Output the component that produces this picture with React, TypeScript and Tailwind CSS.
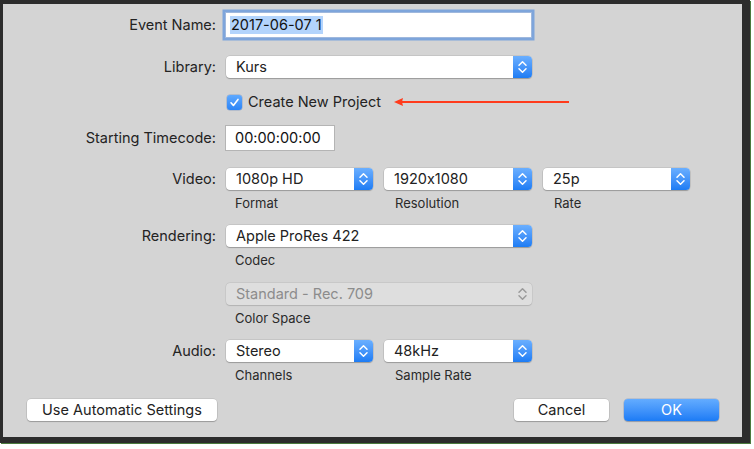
import React from "react";

const font = { fontFamily: 'Inter, "Liberation Sans", sans-serif' };

function Stepper({ disabled = false }: { disabled?: boolean }) {
  return (
    <div
      className={
        disabled
          ? "flex h-full w-[19px] items-center justify-center"
          : "flex h-full w-[19px] items-center justify-center rounded-r-[4px] bg-gradient-to-b from-[#6aafff] to-[#1c7cf4]"
      }
    >
      <svg width="19" height="22" viewBox="0 0 19 22">
        <path
          d="M6 9.2 L9.5 5.8 L13 9.2 M6 12.8 L9.5 16.2 L13 12.8"
          fill="none"
          stroke={disabled ? "#9a9a9a" : "#ffffff"}
          strokeWidth="1.5"
          strokeLinecap="round"
          strokeLinejoin="round"
        />
      </svg>
    </div>
  );
}

function Popup({
  value,
  width,
  disabled = false,
}: {
  value: string;
  width: string;
  disabled?: boolean;
}) {
  return (
    <div
      className={
        (disabled
          ? "bg-[#dedede] text-[#8c8c8c] shadow-[0_0_0_0.5px_rgba(0,0,0,0.08),0_0.5px_1px_rgba(0,0,0,0.12)] "
          : "bg-white text-[#222] shadow-[0_0_0_0.5px_rgba(0,0,0,0.14),0_1px_1px_rgba(0,0,0,0.22)] ") +
        "flex h-[22px] items-center rounded-[4px] " +
        width
      }
    >
      <span className="flex-1 pl-[10px] text-[14.5px] leading-none">{value}</span>
      <Stepper disabled={disabled} />
    </div>
  );
}

function Label({ text }: { text: string }) {
  return (
    <div className="w-[213px] shrink-0 text-right text-[14.5px] leading-none text-[#232323]">
      {text}
    </div>
  );
}

function Sub({ text, w, pl }: { text: string; w: string; pl: string }) {
  return <div className={"text-[13px] leading-none text-[#2a2a2a] " + w + " " + pl}>{text}</div>;
}

function Button({ text, width, primary = false }: { text: string; width: string; primary?: boolean }) {
  return (
    <div
      className={
        (primary
          ? "bg-gradient-to-b from-[#63acff] to-[#1a7bf5] text-white shadow-[0_0_0_0.5px_rgba(0,60,160,0.25),0_1px_1px_rgba(0,0,0,0.2)] "
          : "bg-white text-[#222] shadow-[0_0_0_0.5px_rgba(0,0,0,0.14),0_1px_1px_rgba(0,0,0,0.22)] ") +
        "flex h-[22px] items-center justify-center rounded-[4px] text-[14.5px] leading-none " +
        width
      }
    >
      {text}
    </div>
  );
}

export default function App() {
  return (
    <div
      className="relative h-[449px] w-[754px] overflow-hidden bg-white [font-feature-settings:'calt'_0]"
      style={font}
    >
      <div className="h-[443px] w-[750px] bg-[#2c2c2c] pl-[3px] pt-[4px] shadow-[1px_1px_0_0_#4a7a3e]">
        <div className="flex h-[433px] w-[739px] flex-col bg-[#d4d4d4]">
          {/* Event Name */}
          <div className="mt-[9px] flex h-[24px] items-center">
            <Label text="Event Name:" />
            <div className="ml-[10px] flex h-[24px] w-[305px] items-center bg-white shadow-[0_0_0_1px_#9fb8dd,0_0_0_3.5px_#7ea5db]">
              <span className="ml-[4px] bg-[#b3d4fc] px-[1px] py-[2px] text-[14.5px] leading-none text-[#111]">
                2017-06-07 1
              </span>
            </div>
          </div>

          {/* Library */}
          <div className="mt-[19px] flex h-[22px] items-center">
            <Label text="Library:" />
            <div className="ml-[10px]">
              <Popup value="Kurs" width="w-[306px]" />
            </div>
          </div>

          {/* Checkbox */}
          <div className="mt-[16px] flex h-[16px] items-center">
            <div className="w-[213px] shrink-0" />
            <div className="ml-[11px] flex h-[15px] w-[15px] items-center justify-center rounded-[3px] bg-gradient-to-b from-[#5ea9ff] to-[#2a84f6] shadow-[0_0_0_0.5px_rgba(0,60,160,0.3)]">
              <svg width="11" height="11" viewBox="0 0 11 11">
                <path d="M2 5.8 L4.4 8.4 L9 2.4" fill="none" stroke="white" strokeWidth="1.6" strokeLinecap="round" strokeLinejoin="round" />
              </svg>
            </div>
            <span className="ml-[6px] text-[14.5px] leading-none text-[#232323]">Create New Project</span>
            <svg className="ml-[13px]" width="176" height="10" viewBox="0 0 176 10">
              <path d="M0 5 L9 1 L8 5 L9 9 Z" fill="#ff3b1c" />
              <line x1="7" y1="5" x2="175" y2="5" stroke="#ff3b1c" strokeWidth="2" />
            </svg>
          </div>

          {/* Starting Timecode */}
          <div className="mt-[16px] flex h-[24px] items-center">
            <Label text="Starting Timecode:" />
            <div className="ml-[10px] flex h-[24px] w-[108px] items-center bg-white shadow-[0_0_0_1px_#b4b4b4]">
              <span className="pl-[9px] text-[14.5px] leading-none text-[#111]">00:00:00:00</span>
            </div>
          </div>

          {/* Video */}
          <div className="mt-[18px] flex h-[22px] items-center">
            <Label text="Video:" />
            <div className="ml-[10px] flex gap-[11px]">
              <Popup value="1080p HD" width="w-[147px]" />
              <Popup value="1920x1080" width="w-[148px]" />
              <Popup value="25p" width="w-[147px]" />
            </div>
          </div>
          <div className="mt-[5px] flex h-[16px] items-center">
            <div className="w-[213px] shrink-0" />
            <div className="ml-[10px] flex">
              <Sub text="Format" w="w-[158px]" pl="pl-[9px]" />
              <Sub text="Resolution" w="w-[159px]" pl="pl-[11px]" />
              <Sub text="Rate" w="w-[147px]" pl="pl-[11px]" />
            </div>
          </div>

          {/* Rendering */}
          <div className="mt-[14px] flex h-[22px] items-center">
            <Label text="Rendering:" />
            <div className="ml-[10px]">
              <Popup value="Apple ProRes 422" width="w-[306px]" />
            </div>
          </div>
          <div className="mt-[5px] flex h-[16px] items-center">
            <div className="w-[213px] shrink-0" />
            <div className="ml-[10px]">
              <Sub text="Codec" w="w-[150px]" pl="pl-[9px]" />
            </div>
          </div>

          {/* Color Space */}
          <div className="mt-[15px] flex h-[22px] items-center">
            <div className="w-[213px] shrink-0" />
            <div className="ml-[10px]">
              <Popup value="Standard - Rec. 709" width="w-[306px]" disabled />
            </div>
          </div>
          <div className="mt-[5px] flex h-[16px] items-center">
            <div className="w-[213px] shrink-0" />
            <div className="ml-[10px]">
              <Sub text="Color Space" w="w-[150px]" pl="pl-[9px]" />
            </div>
          </div>

          {/* Audio */}
          <div className="mt-[14px] flex h-[22px] items-center">
            <Label text="Audio:" />
            <div className="ml-[10px] flex gap-[11px]">
              <Popup value="Stereo" width="w-[147px]" />
              <Popup value="48kHz" width="w-[148px]" />
            </div>
          </div>
          <div className="mt-[5px] flex h-[16px] items-center">
            <div className="w-[213px] shrink-0" />
            <div className="ml-[10px] flex">
              <Sub text="Channels" w="w-[158px]" pl="pl-[9px]" />
              <Sub text="Sample Rate" w="w-[159px]" pl="pl-[11px]" />
            </div>
          </div>

          {/* Buttons */}
          <div className="mt-[16px] flex h-[22px] items-center pl-[24px] pr-[23px]">
            <Button text="Use Automatic Settings" width="w-[190px]" />
            <div className="flex-1" />
            <Button text="Cancel" width="w-[95px]" />
            <div className="w-[15px]" />
            <Button text="OK" width="w-[95px]" primary />
          </div>
        </div>
      </div>
    </div>
  );
}
